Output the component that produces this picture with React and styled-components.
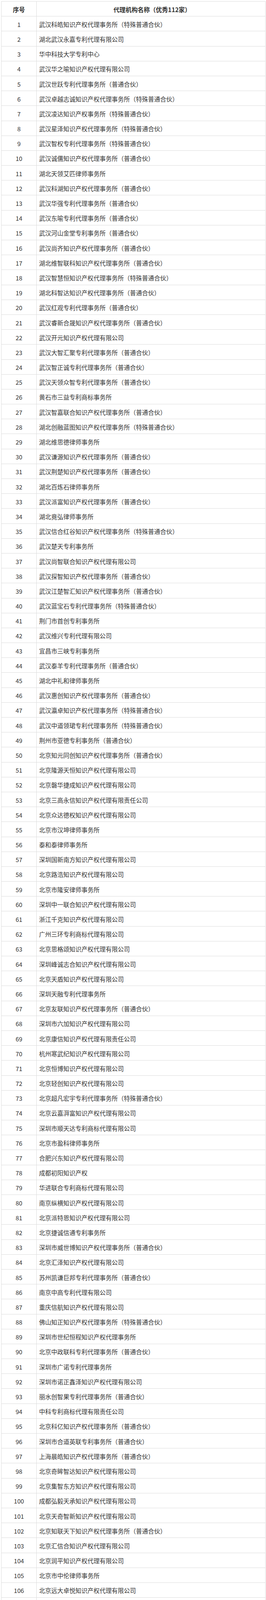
import React from "react";
import styled, { createGlobalStyle } from "styled-components";

const Global = createGlobalStyle`
  html, body { margin: 0; padding: 0; background: #fff; }
  *, *::before, *::after { box-sizing: border-box; }
  body {
    font-family: "Noto Sans CJK SC", "Noto Sans", sans-serif;
    color: #333;
  }
`;

const Page = styled.div`
  padding: 3px 0 0 3px;
`;

const Table = styled.div`
  width: 677px;
  border: 1px solid #dcdcdc;
  border-bottom: none;
  font-size: 15.5px;
  color: #333;
`;

const Row = styled.div`
  display: grid;
  grid-template-columns: 90px 1fr;
  height: 38.2px;
  border-bottom: 1px solid #dcdcdc;
  font-weight: ${(p) => (p.$head ? 700 : 400)};
`;

const NumCell = styled.div`
  display: flex;
  align-items: center;
  justify-content: center;
  border-right: 1px solid #dcdcdc;
  padding-top: 2px;
`;

const NameCell = styled.div`
  display: flex;
  align-items: center;
  justify-content: ${(p) => (p.$center ? "center" : "flex-start")};
  padding: 2px 0 0 6px;
  white-space: nowrap;
`;

const names = [
  "武汉科皓知识产权代理事务所（特殊普通合伙）",
  "湖北武汉永嘉专利代理有限公司",
  "华中科技大学专利中心",
  "武汉华之喻知识产权代理有限公司",
  "武汉世跃专利代理事务所（普通合伙）",
  "武汉卓越志诚知识产权代理事务所（特殊普通合伙）",
  "武汉凌达知识产权事务所（特殊普通合伙）",
  "武汉星泽知识产权代理事务所（特殊普通合伙）",
  "武汉智权专利代理事务所（特殊普通合伙）",
  "武汉诚儒知识产权代理事务所（普通合伙）",
  "湖北天领艾匹律师事务所",
  "武汉科湖知识产权代理事务所（普通合伙）",
  "武汉华强专利代理事务所（普通合伙）",
  "武汉东喻专利代理事务所（普通合伙）",
  "武汉河山金堂专利事务所（普通合伙）",
  "武汉尚齐知识产权代理事务所（普通合伙）",
  "湖北维智联科知识产权代理事务所（普通合伙）",
  "武汉智慧恒知识产权代理事务所（特殊普通合伙）",
  "湖北科智达知识产权代理事务所（普通合伙）",
  "武汉红观专利代理事务所（普通合伙）",
  "武汉睿新合晟知识产权代理事务所（普通合伙）",
  "武汉开元知识产权代理有限公司",
  "武汉大智汇聚专利代理事务所（普通合伙）",
  "武汉智正诚专利代理事务所（普通合伙）",
  "武汉天领众智专利代理事务所（普通合伙）",
  "黄石市三益专利商标事务所",
  "武汉智嘉联合知识产权代理事务所（普通合伙）",
  "湖北创融蓝图知识产权代理事务所（特殊普通合伙）",
  "湖北维思德律师事务所",
  "武汉谦源知识产权代理事务所（普通合伙）",
  "武汉荆楚知识产权代理事务所（普通合伙）",
  "湖北百炼石律师事务所",
  "武汉派富知识产权代理事务所（普通合伙）",
  "湖北竟弘律师事务所",
  "武汉信合红谷知识产权代理事务所（特殊普通合伙）",
  "武汉楚天专利事务所",
  "武汉尚智联合知识产权代理有限公司",
  "武汉探智知识产权代理事务所（普通合伙）",
  "武汉江楚智汇知识产权代理事务所（普通合伙）",
  "武汉蓝宝石专利代理事务所（特殊普通合伙）",
  "荆门市首创专利事务所",
  "武汉维兴专利代理有限公司",
  "宜昌市三峡专利事务所",
  "武汉泰羊专利代理事务所（普通合伙）",
  "湖北中礼和律师事务所",
  "武汉惠创知识产权代理事务所（普通合伙）",
  "武汉瀛卓知识产权代理事务所（特殊普通合伙）",
  "武汉中道领珺专利代理事务所（特殊普通合伙）",
  "荆州市亚德专利事务所（普通合伙）",
  "北京知元同创知识产权代理事务所（普通合伙）",
  "北京隆源天恒知识产权代理有限公司",
  "北京磐华捷成知识产权代理有限公司",
  "北京三高永信知识产权代理有限责任公司",
  "北京众达德权知识产权代理有限公司",
  "北京市汉坤律师事务所",
  "泰和泰律师事务所",
  "深圳国新南方知识产权代理有限公司",
  "北京路浩知识产权代理有限公司",
  "北京市隆安律师事务所",
  "深圳中一联合知识产权代理有限公司",
  "浙江千克知识产权代理有限公司",
  "广州三环专利商标代理有限公司",
  "北京思格颂知识产权代理有限公司",
  "深圳峰诚志合知识产权代理有限公司",
  "北京天盾知识产权代理有限公司",
  "深圳天融专利代理事务所",
  "北京友联知识产权代理事务所（普通合伙）",
  "深圳市六加知识产权代理有限公司",
  "北京康信知识产权代理有限责任公司",
  "杭州寒武纪知识产权代理有限公司",
  "北京恒博知识产权代理有限公司",
  "北京轻创知识产权代理有限公司",
  "北京超凡宏宇专利代理事务所（特殊普通合伙）",
  "北京云嘉湃富知识产权代理有限公司",
  "深圳市顺天达专利商标代理有限公司",
  "北京市盈科律师事务所",
  "合肥兴东知识产权代理有限公司",
  "成都初阳知识产权",
  "华进联合专利商标代理有限公司",
  "南京纵横知识产权代理有限公司",
  "北京派特恩知识产权代理有限公司",
  "北京捷诚信通专利事务所",
  "深圳市威世博知识产权代理事务所（普通合伙）",
  "北京汇泽知识产权代理有限公司",
  "苏州凯谦巨邦专利代理事务所（普通合伙）",
  "南京中高专利代理有限公司",
  "重庆信航知识产权代理有限公司",
  "佛山知正知识产权代理事务所（特殊普通合伙）",
  "深圳市世纪恒程知识产权代理事务所",
  "北京中政联科专利代理事务所（普通合伙）",
  "深圳市广诺专利代理事务所",
  "深圳市诺正鑫泽知识产权代理有限公司",
  "丽水创智果专利代理事务所（普通合伙）",
  "中科专利商标代理有限责任公司",
  "北京科亿知识产权代理事务所（普通合伙）",
  "深圳市合道英联专利事务所（普通合伙）",
  "上海晨皓知识产权代理事务所（普通合伙）",
  "北京奇眸智达知识产权代理有限公司",
  "北京集智东方知识产权代理有限公司",
  "成都弘毅天承知识产权代理有限公司",
  "北京天奇智新知识产权代理有限公司",
  "北京知联天下知识产权代理事务所（普通合伙）",
  "北京汇信合知识产权代理有限公司",
  "北京润平知识产权代理有限公司",
  "北京市中伦律师事务所",
  "北京远大卓悦知识产权代理有限公司",
  "深圳市赛恩倍吉知识产权代理有限公司",
  "深圳紫藤知识产权代理有限公司",
  "北京康达联禾知识产权代理事务所（普通合伙）",
  "北京中创博腾知识产权代理事务所（普通合伙）",
  "北京众合诚成知识产权代理有限公司",
  "北京众允专利代理有限公司",
];

export default function App() {
  return (
    <Page>
      <Global />
      <Table>
        <Row $head>
          <NumCell>序号</NumCell>
          <NameCell $center>代理机构名称（优秀112家）</NameCell>
        </Row>
        {names.map((n, i) => (
          <Row key={i}>
            <NumCell>{i + 1}</NumCell>
            <NameCell>{n}</NameCell>
          </Row>
        ))}
      </Table>
    </Page>
  );
}
